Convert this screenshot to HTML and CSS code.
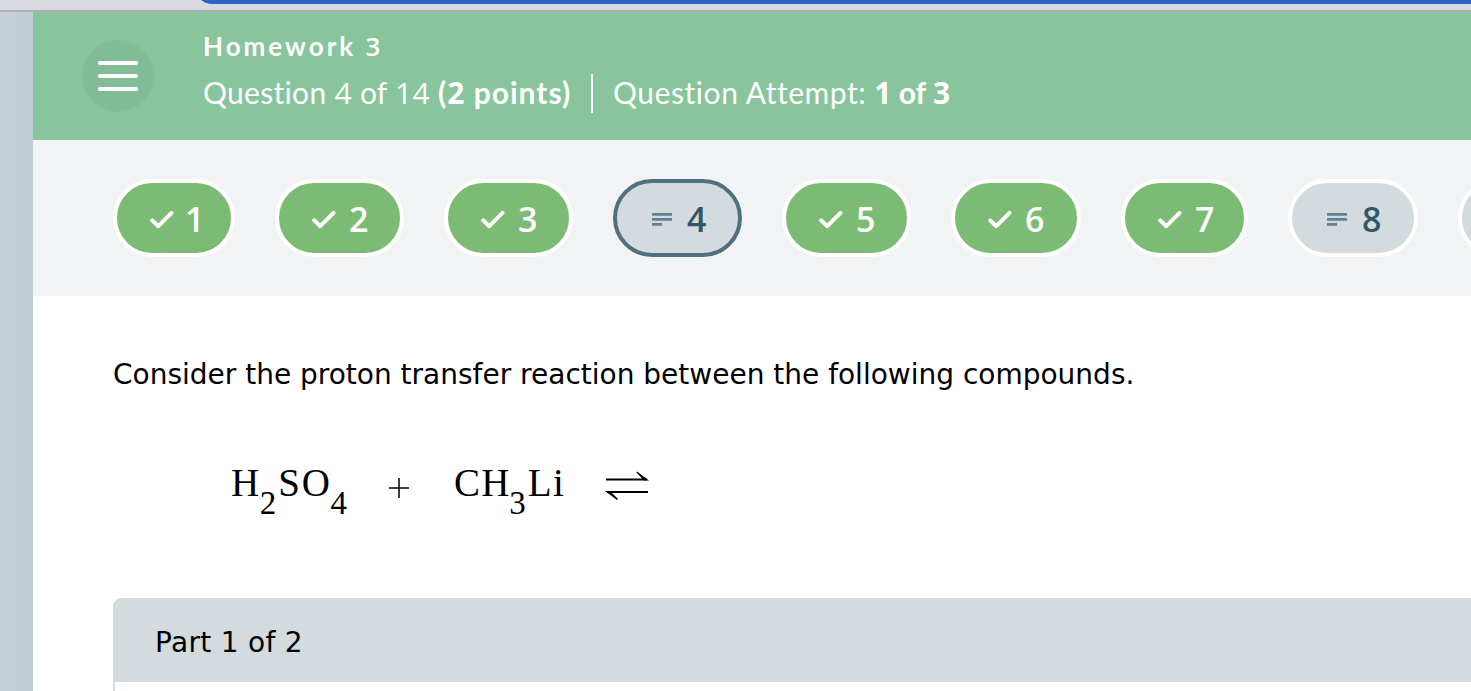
FILE: index.html
```html
<!DOCTYPE html>
<html lang="en">
<head>
<meta charset="utf-8">
<title>Homework 3</title>
<link rel="stylesheet" href="styles.css">
</head>
<body>
<svg class="defs" aria-hidden="true">
  <symbol id="check" viewBox="0 0 24 20"><path d="M2.2 10.4 8.3 16.2 21.5 2.8" fill="none" stroke="#fff" stroke-width="4" stroke-linecap="round" stroke-linejoin="round"/></symbol>
  <symbol id="lines" viewBox="0 0 20 14"><path d="M0 1.4H20M0 6.4H20M0 11.4H10" fill="none" stroke="#638290" stroke-width="2.7"/></symbol>
</svg>
<div class="browser"><div class="address"></div></div>
<div class="window">
  <aside class="gutter"></aside>
  <main class="page">
    <header class="header">
      <button class="menu" aria-label="Menu"><span></span><span></span><span></span></button>
      <div class="titles">
        <h1 class="title">Homework <span class="num">3</span></h1>
        <div class="meta">
          <div class="question">Question <span class="num">4</span> of <span class="num">14</span> <b>(<span class="num">2</span> points)</b></div>
          <div class="attempt"><span class="label">Question Attempt:</span> <b><span class="num">1</span> of <span class="num">3</span></b></div>
        </div>
      </div>
    </header>
    <nav class="pills">
      <a class="pill w122"><svg class="check"><use href="#check"/></svg><span>1</span></a>
      <a class="pill"><svg class="check"><use href="#check"/></svg><span>2</span></a>
      <a class="pill"><svg class="check"><use href="#check"/></svg><span>3</span></a>
      <a class="pill open current"><svg class="lines"><use href="#lines"/></svg><span>4</span></a>
      <a class="pill"><svg class="check"><use href="#check"/></svg><span>5</span></a>
      <a class="pill w130"><svg class="check"><use href="#check"/></svg><span>6</span></a>
      <a class="pill w127"><svg class="check"><use href="#check"/></svg><span>7</span></a>
      <a class="pill open w130"><svg class="lines"><use href="#lines"/></svg><span>8</span></a>
      <a class="pill open w130"></a>
    </nav>
    <section class="content">
      <p class="prompt">Consider the proton transfer reaction between the following compounds.</p>
      <div class="equation">
        <span class="acid">H<sub>2</sub>SO<sub>4</sub></span>
        <svg class="plus" viewBox="0 0 20 20"><path d="M0 10H20M10 0V20" stroke="#000" stroke-width="1.5"/></svg>
        <span class="base">CH<sub>3</sub>Li</span>
        <svg class="arrows" viewBox="0 0 44 30"><path d="M1 10.5H42M43 23H2" stroke="#000" stroke-width="2"/><path d="M32 2.5 44 11.5H39L31.5 3.5ZM12 31 0 22H5L13 30Z"/></svg>
      </div>
      <div class="part"><div class="part-head">Part 1 of 2</div></div>
    </section>
  </main>
</div>
</body>
</html>
```
FILE: styles.css
```css
* { box-sizing: border-box; }
body { margin: 0; width: 1471px; height: 691px; overflow: hidden; background: #fff; }
.defs { display: none; }
.browser { height: 12px; background: #d9dae0; border-bottom: 2px solid #aeafb3; padding-left: 195px; overflow: hidden; }
.address { height: 34px; margin-top: -30px; background: #2f62cd; border-radius: 20px 0 0 20px; }
.window { display: flex; height: 679px; }
.gutter { width: 33px; flex: none; background: linear-gradient(90deg, #c5d0d7, #c2cdd3); }
.page { flex: 1; min-width: 0; overflow: hidden; }
.header { height: 128px; background: #88c59d; display: flex; color: #fff; padding-left: 49px; font-family: Lato, sans-serif; font-variant-ligatures: none; }
.menu { width: 72px; height: 72px; margin: 28px 49px 0 0; padding: 0; border: 0; border-radius: 50%; background: #82bd98; display: flex; flex-direction: column; align-items: center; justify-content: center; gap: 9px; }
.menu span { width: 40px; height: 4px; border-radius: 2px; background: #fff; }
.title { margin: 18px 0 0; height: 32px; font-size: 26px; line-height: 32px; font-weight: 700; letter-spacing: 3px; white-space: nowrap; }
.num { font-family: "Open Sans", sans-serif; }
.title .num { font-weight: 600; }
.meta { display: flex; height: 39px; margin-top: 12px; font-size: 30px; line-height: 37px; font-weight: 400; white-space: nowrap; letter-spacing: 0.3px; }
.meta .num { font-weight: 400; }
.meta b { letter-spacing: 1px; }
.meta b .num { font-weight: 700; }
.question { width: 390px; border-right: 2px solid #fff; }
.attempt { padding-left: 20px; }
.attempt .label { letter-spacing: 0.55px; }
.attempt b { letter-spacing: 0; }
.pills { height: 156px; background: #f1f3f5; display: flex; gap: 40px; padding: 39px 0 0 80px; }
.pill { flex: none; width: 129px; height: 78px; border: 4px solid #fff; border-radius: 39px; background: #7cbb73; color: #fff; display: flex; align-items: center; padding-left: 33px; font: 600 34px/72px "Open Sans", sans-serif; }
.pill.w122 { width: 122px; }
.pill.w127 { width: 127px; }
.pill.w130 { width: 130px; }
.pill.open { background: #d3dbde; color: #335666; padding-left: 35px; }
.pill.current { border-color: #50707d; }
.pill span { height: 70px; }
.w122 span { margin-left: -2px; }
.check { width: 24px; height: 20px; margin: 4px 13px 0 0; }
.lines { width: 20px; height: 14px; margin: 4px 15px 0 0; }
.content { padding-left: 80px; }
.prompt { margin: 61px 0 0; font: 28px/36px "DejaVu Sans", sans-serif; white-space: nowrap; }
.equation { display: flex; height: 60px; margin: 65px 0 80px; padding-left: 118px; font: 39px/50px "Liberation Serif", serif; white-space: nowrap; }
.equation sub { font-size: 33px; line-height: 0; vertical-align: -18px; letter-spacing: 2px; margin-left: -1.5px; }
.acid { width: 158px; letter-spacing: 2px; }
.plus { width: 20px; height: 20px; margin: 20px 45px 0 0; }
.base { width: 151px; letter-spacing: 1.3px; }
.arrows { width: 44px; height: 30px; margin-top: 11px; overflow: visible; }
.part { height: 120px; border-left: 2px solid #d3dbde; border-radius: 9px 0 0 0; }
.part-head { height: 84px; margin-left: -2px; padding-left: 42px; border-radius: 9px 0 0 0; background: #d3dbde; font: 28px/90px "DejaVu Sans", sans-serif; letter-spacing: 0.3px; }
```
